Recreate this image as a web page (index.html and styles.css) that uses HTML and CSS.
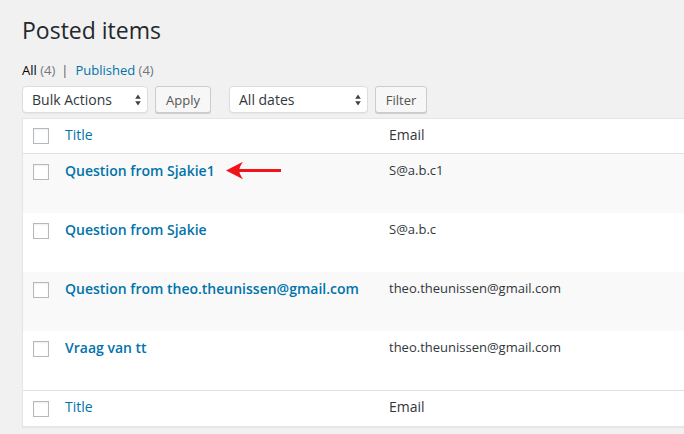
FILE: index.html
```html
<!DOCTYPE html>
<html lang="en">
<head>
<meta charset="utf-8">
<title>Posted items</title>
<link rel="stylesheet" href="styles.css">
</head>
<body>
<div class="wrap">
  <h1 class="page-title">Posted items</h1>
  <ul class="subsubsub">
    <li class="current">All <span class="count">(4)</span></li>
    <li class="sep">|</li>
    <li><a href="#" class="link">Published</a> <span class="count">(4)</span></li>
  </ul>
  <div class="tablenav">
    <div class="select select-bulk"><span>Bulk Actions</span>
      <svg class="updown" width="6" height="12" viewBox="0 0 6 12"><path d="M3 0.5 L5.8 4.8 L0.2 4.8 Z M3 11.5 L5.8 7.2 L0.2 7.2 Z" fill="#3c434a"/></svg>
    </div>
    <div class="button btn-apply">Apply</div>
    <div class="select select-dates"><span>All dates</span>
      <svg class="updown" width="6" height="12" viewBox="0 0 6 12"><path d="M3 0.5 L5.8 4.8 L0.2 4.8 Z M3 11.5 L5.8 7.2 L0.2 7.2 Z" fill="#3c434a"/></svg>
    </div>
    <div class="button btn-filter">Filter</div>
  </div>
  <table class="list">
    <thead>
      <tr class="head">
        <td class="check"><span class="cb"></span></td>
        <th class="col-title"><a href="#" class="link">Title</a></th>
        <th class="col-email">Email</th>
      </tr>
    </thead>
    <tbody>
      <tr class="alt">
        <td class="check cell-check"><span class="cb"></span></td>
        <td class="col-title cell"><span class="title-wrap"><a href="#" class="row-title">Question from Sjakie1</a><svg class="arrow" width="56" height="19" viewBox="0 0 56 19"><path d="M0 9.5 L17 0.8 Q13.5 6 13.5 8 L55 8 L55 11 L13.5 11 Q13.5 13 17 18.2 Z" fill="#f0141b"/></svg></span></td>
        <td class="col-email cell email">S@a.b.c1</td>
      </tr>
      <tr>
        <td class="check cell-check"><span class="cb"></span></td>
        <td class="col-title cell"><a href="#" class="row-title">Question from Sjakie</a></td>
        <td class="col-email cell email">S@a.b.c</td>
      </tr>
      <tr class="alt">
        <td class="check cell-check"><span class="cb"></span></td>
        <td class="col-title cell"><a href="#" class="row-title">Question from theo.theunissen@gmail.com</a></td>
        <td class="col-email cell email">theo.theunissen@gmail.com</td>
      </tr>
      <tr>
        <td class="check cell-check"><span class="cb"></span></td>
        <td class="col-title cell"><a href="#" class="row-title">Vraag van tt</a></td>
        <td class="col-email cell email">theo.theunissen@gmail.com</td>
      </tr>
    </tbody>
    <tfoot>
      <tr class="foot">
        <td class="check"><span class="cb"></span></td>
        <th class="col-title"><a href="#" class="link">Title</a></th>
        <th class="col-email">Email</th>
      </tr>
    </tfoot>
  </table>
</div>
</body>
</html>
```

FILE: styles.css
```css
html, body {
  margin: 0;
  padding: 0;
}
body {
  background: #f1f1f1;
  font-family: "Open Sans", "Noto Sans", sans-serif;
  color: #32373c;
  overflow: hidden;
  width: 684px;
  height: 434px;
}
.wrap {
  padding-left: 22px;
  padding-top: 16px;
}
.page-title {
  margin: 0;
  font-size: 23px;
  font-weight: 400;
  line-height: 29px;
  color: #23282d;
}
.subsubsub {
  list-style: none;
  margin: 15px 0 0;
  padding: 0;
  display: flex;
  font-size: 13px;
  line-height: 20px;
  height: 20px;
  color: #555;
}
.subsubsub li {
  white-space: pre;
}
.subsubsub .current {
  color: #000;
}
.subsubsub .sep {
  color: #555;
  padding: 0 7px 0 6px;
}
.count {
  color: #72777c;
}
.link {
  color: #0073aa;
  text-decoration: none;
}
.tablenav {
  margin-top: 6px;
  height: 28px;
  display: flex;
  align-items: flex-start;
}
.select {
  box-sizing: border-box;
  height: 27px;
  background: #fff;
  border: 1px solid #ddd;
  border-radius: 4px;
  box-shadow: 0 1px 1px rgba(0, 0, 0, 0.05);
  display: flex;
  align-items: center;
  justify-content: space-between;
  padding: 0 6px 0 9px;
  font-size: 14px;
  color: #32373c;
}
.select-bulk {
  width: 126px;
}
.select-dates {
  width: 139px;
  margin-left: 18px;
}
.button {
  box-sizing: border-box;
  height: 27px;
  margin-left: 7px;
  background: #f7f7f7;
  border: 1px solid #ccc;
  border-radius: 3px;
  box-shadow: 0 1px 0 #ccc;
  font-size: 13px;
  line-height: 26px;
  color: #555;
  text-align: center;
}
.btn-apply {
  width: 56px;
}
.btn-filter {
  width: 52px;
}
.list {
  margin-top: 4px;
  width: 690px;
  border-collapse: separate;
  border-spacing: 0;
  background: #fff;
  border: 1px solid #e5e5e5;
  box-shadow: 0 1px 1px rgba(0, 0, 0, 0.04);
  table-layout: fixed;
  font-size: 14px;
  line-height: 19.6px;
}
.list th, .list td {
  text-align: left;
  font-weight: 400;
  vertical-align: top;
  padding: 0;
}
.check {
  width: 32px;
  padding-left: 10px !important;
  box-sizing: border-box;
}
.col-title {
  width: 324px;
}
.head th, .head td {
  height: 35px;
  border-bottom: 1px solid #e1e1e1;
  box-sizing: border-box;
}
.foot th, .foot td {
  height: 36px;
  border-top: 1px solid #e1e1e1;
  box-sizing: border-box;
}
.head th, .foot th {
  font-size: 14px;
  line-height: 19.6px;
  padding: 6px 10px 0;
  color: #32373c;
}
.head .check {
  padding-top: 9px;
}
.foot .check {
  padding-top: 10px;
}
.cb {
  display: block;
  box-sizing: border-box;
  width: 16px;
  height: 16px;
  border: 1px solid #b4b9be;
  background: #fff;
  box-shadow: inset 0 1px 2px rgba(0, 0, 0, 0.07);
}
tbody tr {
  height: 59px;
}
tbody tr.alt {
  background: #f9f9f9;
}
.cell-check {
  padding-top: 10px !important;
}
.cell {
  padding: 7px 10px 0 !important;
  height: 59px;
  box-sizing: border-box;
}
.row-title {
  font-size: 14px;
  font-weight: 600;
  line-height: 19.6px;
  color: #0073aa;
  text-decoration: none;
}
.title-wrap {
  position: relative;
  display: inline-block;
  vertical-align: top;
  line-height: 19.6px;
}
.arrow {
  position: absolute;
  left: calc(100% + 11px);
  top: 0;
}
.email {
  font-size: 13px;
  line-height: 19.6px;
  color: #32373c;
}
```
